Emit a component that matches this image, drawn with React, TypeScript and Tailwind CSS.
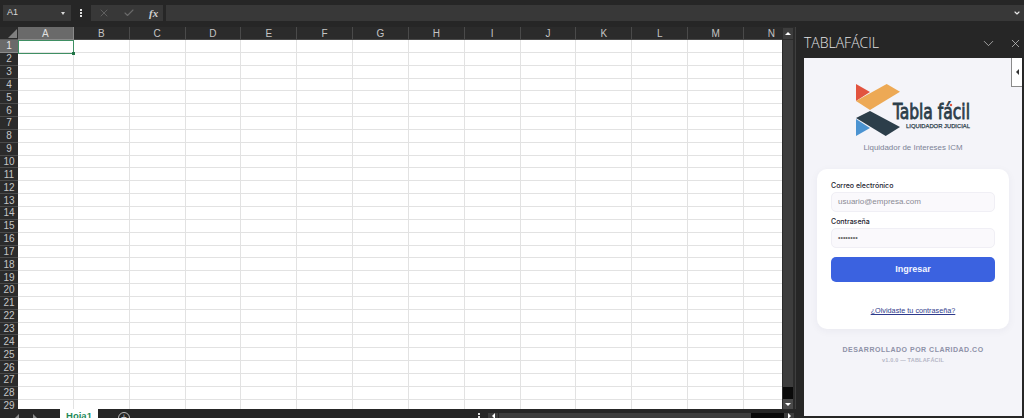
import React from "react";
import { X, Check, ChevronDown } from "lucide-react";

const cols = ["A","B","C","D","E","F","G","H","I","J","K","L","M","N"];
const rows = Array.from({ length: 29 }, (_, i) => i + 1);
const font = { fontFamily: '"Liberation Sans", Arial, sans-serif' };

function Logo() {
  return (
    <svg width="130" height="58" viewBox="0 0 130 58" className="block">
      <polygon points="0,0 14,8 0,17" fill="#e2533f" />
      <polygon points="30.7,0 44,7.7 14,26 0,17" fill="#eda955" />
      <polygon points="14,27 44,43 29.7,52 0,34" fill="#2c3e4a" />
      <polygon points="0,35 14,44 0,52" fill="#4b93d1" />
      <text x="37" y="35" fontFamily='"DejaVu Sans Condensed","DejaVu Sans",sans-serif' fontSize="21" fontWeight="400" fill="#2c3e4a" stroke="#2c3e4a" strokeWidth="0.8" textLength="77" lengthAdjust="spacingAndGlyphs">Tabla fácil</text>
      <circle cx="95" cy="21" r="1.2" fill="#e2533f" />
      <text x="50" y="43.5" fontFamily='"Liberation Sans",sans-serif' fontSize="6" fontWeight="400" fill="#2c3e4a" stroke="#2c3e4a" strokeWidth="0.25" textLength="64" lengthAdjust="spacingAndGlyphs">LIQUIDADOR JUDICIAL</text>
    </svg>
  );
}

function FormulaBar() {
  return (
    <div className="flex h-[27px] shrink-0 items-start bg-[#262626] pl-[3px] pt-[5px]">
      <div className="flex h-4 w-[68px] items-center justify-between bg-[#383838] pl-1 pr-1 text-[9px] text-[#d8d8d8]">
        <span>A1</span>
        <span className="mr-[2px] h-0 w-0 border-x-[2.5px] border-t-[3px] border-x-transparent border-t-[#d8d8d8]" />
      </div>
      <div className="flex h-4 w-[20px] flex-col items-center justify-center gap-[1px]">
        <span className="h-[2px] w-[2px] bg-[#e0e0e0]" />
        <span className="h-[2px] w-[2px] bg-[#e0e0e0]" />
        <span className="h-[2px] w-[2px] bg-[#e0e0e0]" />
      </div>
      <div className="flex h-4 w-[72px] items-center bg-[#383838] pl-[7px]">
        <X size={12} strokeWidth={1.6} className="text-[#6a6a6a]" />
        <Check size={12} strokeWidth={2.2} className="ml-[13px] text-[#6a6a6a]" />
        <span className="ml-[14px] text-[11px] font-bold italic text-[#d0d0d0]" style={{ fontFamily: '"Liberation Serif", serif' }}>fx</span>
      </div>
      <div className="ml-[3px] flex h-4 flex-1 items-center justify-end bg-[#383838] pr-[3px]">
        <ChevronDown size={8} strokeWidth={3.5} className="text-[#e8e8e8]" />
      </div>
    </div>
  );
}

function Sheet() {
  return (
    <div className="flex min-w-0 flex-1 flex-col overflow-hidden">
      <div className="flex h-[13px] shrink-0 bg-[#2b2b2b]">
        <div className="relative w-[18px] shrink-0 border-b border-[#5a5a5a]">
          <span className="absolute bottom-[1px] right-[1px] h-0 w-0 border-b-[9px] border-l-[9px] border-b-[#808080] border-l-transparent" />
        </div>
        {cols.map((c, i) => (
          <div
            key={c}
            className={`flex w-[55.85px] shrink-0 items-center justify-center border-r border-b text-[10px] ${
              i === 0 ? "border-[#8a8a8a] bg-[#6a6a6a] text-[#e0e0e0]" : "border-[#4a4a4a] text-[#c4c4c4]"
            }`}
          >
            {c}
          </div>
        ))}
      </div>
      <div className="flex min-h-0 flex-1 overflow-hidden">
        <div className="w-[18px] shrink-0 bg-[#2b2b2b]">
          {rows.map((r) => (
            <div
              key={r}
              className={`flex h-[12.857px] items-center justify-center border-b text-[10px] ${
                r === 1 ? "border-[#8a8a8a] bg-[#6a6a6a] text-[#e8e8e8]" : "border-[#4a4a4a] text-[#c4c4c4]"
              }`}
            >
              {r}
            </div>
          ))}
        </div>
        <div className="relative flex-1 overflow-hidden bg-white">
          {rows.map((r) => (
            <div key={r} className="flex h-[12.857px]">
              {cols.map((c) => (
                <div key={c} className="w-[55.85px] shrink-0 border-r border-b border-[#e2e2e2]" />
              ))}
            </div>
          ))}
          <div className="absolute left-0 top-0 h-[13.5px] w-[56px] border border-[#3f8f63]">
            <span className="absolute -bottom-[2px] -right-[2px] h-[3px] w-[3px] bg-[#217346]" />
          </div>
        </div>
      </div>
    </div>
  );
}

function VScroll() {
  return (
    <div className="flex w-[14px] shrink-0 flex-col border-r border-[#3f3f3f] bg-[#2b2b2b] pl-[1px] pr-[2px]">
      <div className="mt-[1px] flex h-[11px] items-center justify-center bg-[#3d3d3d]">
        <span className="h-0 w-0 border-x-[3px] border-b-[3px] border-x-transparent border-b-white" />
      </div>
      <div className="mt-[1px] flex-1 bg-[#3d3d3d]" />
      <div className="h-[12px] bg-[#0a0a0a]" />
      <div className="flex h-[10px] items-center justify-center bg-[#4a4a4a]">
        <span className="h-0 w-0 border-x-[3px] border-t-[3px] border-x-transparent border-t-white" />
      </div>
    </div>
  );
}

function BottomBar() {
  return (
    <div className="flex h-[9px] shrink-0 items-start overflow-hidden bg-[#262626]">
      <div className="flex w-[60px] shrink-0 items-start gap-[14px] pl-[15px] pt-[5px]">
        <span className="h-0 w-0 border-y-[4px] border-r-[4px] border-y-transparent border-r-[#8a8a8a]" />
        <span className="h-0 w-0 border-y-[4px] border-l-[4px] border-y-transparent border-l-[#8a8a8a]" />
      </div>
      <div className="h-[14px] w-[38px] shrink-0 bg-white pt-[1px] text-center text-[9.5px] font-bold leading-[12px] text-[#1f8a5a]">
        Hoja1
      </div>
      <div className="ml-[20px] mt-[3px] flex h-[12px] w-[12px] shrink-0 items-center justify-center rounded-full border border-[#bdbdbd] text-[10px] leading-none text-[#bdbdbd]">+</div>
      <div className="flex flex-1 justify-end">
        <div className="mr-[8px] mt-[4px] flex flex-col gap-[1px]">
          <span className="h-[2px] w-[2px] bg-[#e0e0e0]" />
          <span className="h-[2px] w-[2px] bg-[#e0e0e0]" />
        </div>
      </div>
      <div className="mt-[4px] flex h-[5px] w-[308px] shrink-0">
        <div className="flex w-[10px] items-center justify-center bg-[#3d3d3d]">
          <span className="h-0 w-0 border-y-[3px] border-r-[3px] border-y-transparent border-r-white" />
        </div>
        <div className="ml-[1px] w-[252px] bg-[#3d3d3d]" />
        <div className="flex-1 bg-[#0a0a0a]" />
        <div className="mr-[2px] flex w-[10px] items-center justify-center bg-[#3d3d3d]">
          <span className="h-0 w-0 border-y-[3px] border-l-[3px] border-y-transparent border-l-white" />
        </div>
      </div>
    </div>
  );
}

function Panel() {
  return (
    <div className="flex w-[228px] shrink-0 flex-col bg-[#262626] pb-[2px] pl-[8px] pr-[2px]">
      <div className="flex h-[31px] shrink-0 items-center justify-between pt-[1px]">
        <span className="text-[14px] font-light leading-none text-[#e4e4e4]" style={{ fontFamily: '"Open Sans", sans-serif' }}>TABLAFÁCIL</span>
        <div className="flex items-center gap-[12px]">
          <ChevronDown size={17} strokeWidth={1} className="text-[#d0d0d0]" />
          <X size={13} strokeWidth={1.3} className="text-[#d0d0d0]" />
        </div>
      </div>
      <div className="relative flex min-h-0 flex-1 flex-col items-center bg-[#f4f4f9]">
        <div className="absolute right-0 top-0 flex h-[29px] w-[11px] items-center justify-center border-b border-l border-[#8a8a8a] bg-white">
          <span className="h-0 w-0 border-y-[3px] border-r-[3px] border-y-transparent border-r-[#333]" />
        </div>
        <div className="ml-[52px] mt-[26px] w-[130px] self-start">
          <Logo />
        </div>
        <div className="text-[7.9px] leading-[12px] text-[#7c8296]">Liquidador de Intereses ICM</div>
        <div className="mt-[15px] flex h-[160px] w-[192px] flex-col rounded-[10px] bg-white px-[14px] pt-[12px] shadow-[0_2px_8px_rgba(30,30,80,0.05)]">
          <label className="text-[7px] font-medium leading-[10px] text-[#23232f]" style={{ fontFamily: "Inter, sans-serif" }}>Correo electrónico</label>
          <div className="mt-[1px] flex h-5 items-center rounded-[5px] border border-[#f0eff5] bg-[#faf9fc] px-[6px] text-[8px] text-[#8a8a94]">usuario@empresa.com</div>
          <label className="mt-[5px] text-[7px] font-medium leading-[10px] text-[#23232f]" style={{ fontFamily: "Inter, sans-serif" }}>Contraseña</label>
          <div className="mt-[1px] flex h-5 items-center rounded-[5px] border border-[#f0eff5] bg-[#faf9fc] px-[6px] text-[7px] text-[#666]">••••••••</div>
          <button className="mt-[9px] h-[25px] rounded-[5px] bg-[#3b62e0] text-[9px] font-bold text-[#f4f6ff]">Ingresar</button>
          <a className="mt-[24px] text-center text-[7.25px] leading-[10px] text-[#2e3a8c] underline">¿Olvidaste tu contraseña?</a>
        </div>
        <div className="mt-[16px] text-[7px] font-bold leading-[10px] tracking-[0.5px] text-[#8e92a8]">DESARROLLADO POR CLARIDAD.CO</div>
        <div className="mt-[1px] text-[5.5px] font-bold leading-[8px] tracking-[0.2px] text-[#b4b6c6]">v1.0.0 — TABLAFÁCIL</div>
      </div>
    </div>
  );
}

export default function App() {
  return (
    <div className="flex h-[418px] w-[1024px] flex-col overflow-hidden bg-[#262626]" style={font}>
      <FormulaBar />
      <div className="flex min-h-0 flex-1">
        <div className="flex min-w-0 flex-1 flex-col">
          <div className="flex min-h-0 flex-1">
            <Sheet />
            <VScroll />
          </div>
          <BottomBar />
        </div>
        <Panel />
      </div>
    </div>
  );
}
